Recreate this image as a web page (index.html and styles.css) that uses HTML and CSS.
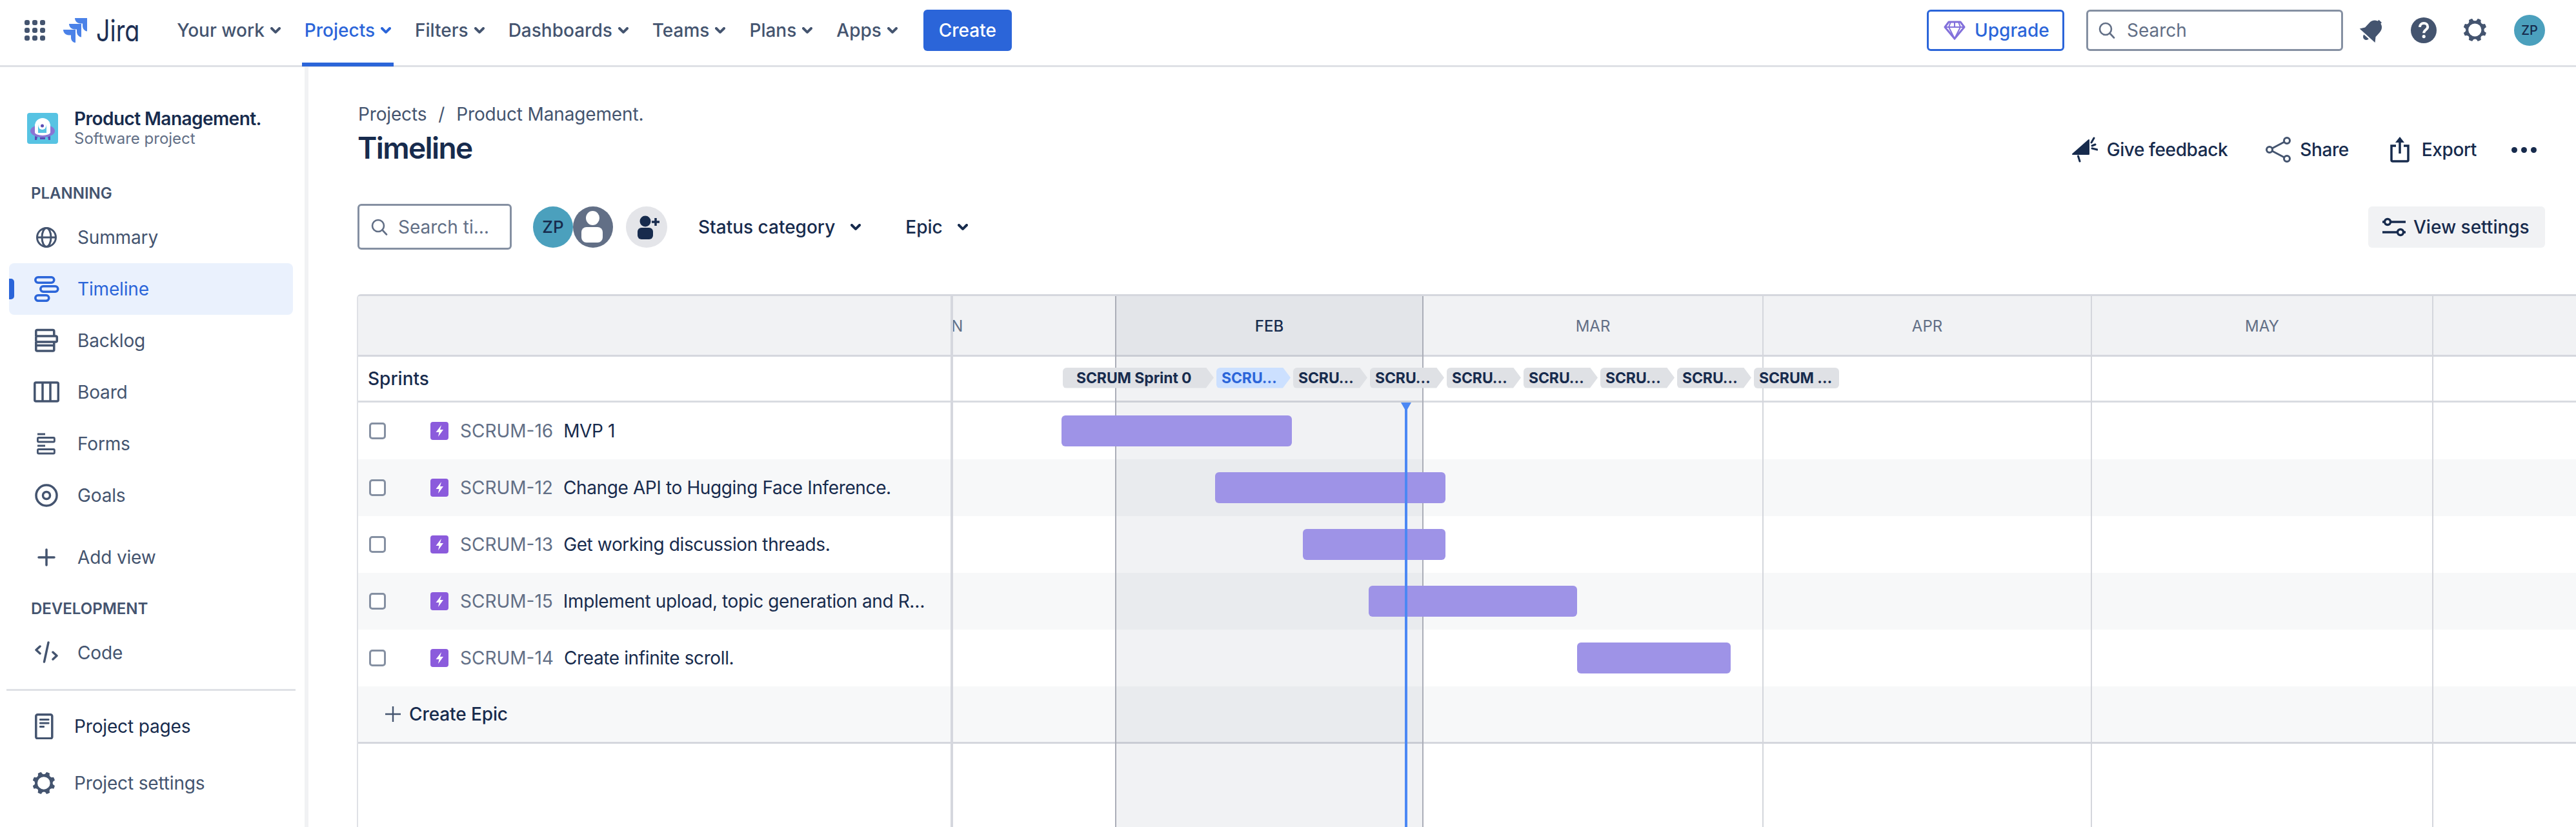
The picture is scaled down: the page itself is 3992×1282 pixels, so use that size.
FILE: index.html
```html
<!DOCTYPE html>
<html lang="en">
<head>
<meta charset="utf-8">
<title>Timeline - Jira</title>
<link rel="stylesheet" href="styles.css">
</head>
<body>
<header class="topbar">
  <svg class="apps" viewBox="0 0 32 32"><g fill="#44546F"><rect x="0" y="0" width="8" height="8" rx="3"/><rect x="12" y="0" width="8" height="8" rx="3"/><rect x="24" y="0" width="8" height="8" rx="3"/><rect x="0" y="12" width="8" height="8" rx="3"/><rect x="12" y="12" width="8" height="8" rx="3"/><rect x="24" y="12" width="8" height="8" rx="3"/><rect x="0" y="24" width="8" height="8" rx="3"/><rect x="12" y="24" width="8" height="8" rx="3"/><rect x="24" y="24" width="8" height="8" rx="3"/></g></svg>
  <svg class="jira-mark" viewBox="0 0 37 38"><g fill="#4B82E8"><path d="M37 0H18c0 4.700 3.800 8.500 8.500 8.500H30v3.400c0 4.700 3 8.100 7 8.500z"/><path d="M28 9H9c0 4.700 3.800 8.500 8.500 8.500H21v3.400c0 4.700 3 8.100 7 8.500z"/><path d="M19 18H0c0 4.700 3.800 8.500 8.500 8.500H12v3.400c0 4.700 3 8.100 7 8.100z"/></g></svg>
  <span class="jira-word">Jira</span>
  <nav class="mainnav">
    <a class="navlink">Your work<svg class="chev" viewBox="8 10 8 5"><use href="#chevron"/></svg></a>
    <a class="navlink is-current">Projects<svg class="chev" viewBox="8 10 8 5"><use href="#chevron"/></svg></a>
    <a class="navlink">Filters<svg class="chev" viewBox="8 10 8 5"><use href="#chevron"/></svg></a>
    <a class="navlink">Dashboards<svg class="chev" viewBox="8 10 8 5"><use href="#chevron"/></svg></a>
    <a class="navlink">Teams<svg class="chev" viewBox="8 10 8 5"><use href="#chevron"/></svg></a>
    <a class="navlink">Plans<svg class="chev" viewBox="8 10 8 5"><use href="#chevron"/></svg></a>
    <a class="navlink">Apps<svg class="chev" viewBox="8 10 8 5"><use href="#chevron"/></svg></a>
  </nav>
  <button class="create-btn">Create</button>
  <div class="topright">
    <button class="upgrade-btn"><svg class="gem" viewBox="0 0 34 30"><path d="M8 2h18l6 8-15 18L2 10z" fill="none" stroke="#8270DB" stroke-width="3" stroke-linejoin="round"/><path d="M2 10h30M11 2l-3 8 9 18 9-18-3-8M17 2v8" fill="none" stroke="#8270DB" stroke-width="2"/></svg>Upgrade</button>
    <div class="global-search"><svg class="mag" viewBox="0 0 26 26"><circle cx="11" cy="11" r="9" fill="none" stroke="#626F86" stroke-width="2.600"/><path d="M17.500 17.500l6.500 7" stroke="#626F86" stroke-width="2.600" stroke-linecap="round"/></svg><span>Search</span></div>
    <div class="global-icons">
      <svg class="gicon" viewBox="0 0 24 24"><g transform="rotate(42 12 12)" fill="#44546F"><path d="M12 3.500c-3.300 0-5.500 2.500-5.500 5.800v4.700L4 17.500h16L17.500 14V9.300c0-3.300-2.200-5.800-5.500-5.800z"/><path d="M10.500 2.500h3v2h-3z"/><path d="M9.500 18.700a2.500 2.500 0 0 0 5 0z"/></g></svg>
      <svg class="gicon" viewBox="0 0 24 24"><circle cx="12" cy="12" r="10" fill="#44546F"/><path d="M9 9.500c0-1.800 1.300-3 3.100-3 1.700 0 3 1.100 3 2.700 0 2.400-3 2.500-3 4.900" fill="none" stroke="#fff" stroke-width="2"/><circle cx="12.100" cy="16.800" r="1.300" fill="#fff"/></svg>
      <svg class="gicon" viewBox="0 0 24 24"><use href="#gear"/></svg>
      <div class="avatar avatar-small">ZP</div>
    </div>
  </div>
</header>

<svg class="defs" aria-hidden="true">
  <defs>
    <path id="chevron" d="M8.292 10.293a1.009 1.009 0 0 0 0 1.419l2.939 2.965c.218.215.5.322.779.322s.556-.107.769-.322l2.930-2.955a1.010 1.010 0 0 0 0-1.419.987.987 0 0 0-1.406 0l-2.298 2.317-2.307-2.327a.99.99 0 0 0-1.406 0z" fill="currentColor"/>
    <path id="gear" fill="#44546F" fill-rule="evenodd" d="M11.701 16.700a5.002 5.002 0 1 1 0-10.003 5.002 5.002 0 0 1 0 10.004m8.368-3.117a1.995 1.995 0 0 1-1.346-1.885c0-.876.563-1.613 1.345-1.885a.48.48 0 0 0 .315-.574 8.947 8.947 0 0 0-.836-1.993.477.477 0 0 0-.598-.195 2.040 2.040 0 0 1-1.290.08 1.988 1.988 0 0 1-1.404-1.395 2.040 2.040 0 0 1 .076-1.297.478.478 0 0 0-.196-.597 8.980 8.980 0 0 0-1.975-.826.479.479 0 0 0-.574.314 1.995 1.995 0 0 1-1.885 1.346 1.994 1.994 0 0 1-1.884-1.345.482.482 0 0 0-.575-.315c-.708.2-1.379.485-2.004.842a.47.47 0 0 0-.198.582A2.002 2.002 0 0 1 4.445 7.060a.478.478 0 0 0-.595.196 8.946 8.946 0 0 0-.833 1.994.48.48 0 0 0 .308.572 1.995 1.995 0 0 1 1.323 1.877c0 .867-.552 1.599-1.324 1.877a.479.479 0 0 0-.308.57 8.990 8.990 0 0 0 .723 1.790.477.477 0 0 0 .624.194c.595-.273 1.343-.264 2.104.238.117.077.225.185.302.3.527.8.512 1.580.198 2.188a.473.473 0 0 0 .168.628 8.946 8.946 0 0 0 2.110.897.474.474 0 0 0 .57-.313 1.995 1.995 0 0 1 1.886-1.353c.878 0 1.618.567 1.887 1.353a.475.475 0 0 0 .57.313 8.964 8.964 0 0 0 2.084-.883.473.473 0 0 0 .167-.631c-.318-.608-.337-1.393.191-2.195.077-.116.185-.225.302-.302.772-.511 1.527-.513 2.125-.23a.477.477 0 0 0 .628-.19 8.925 8.925 0 0 0 .728-1.793.478.478 0 0 0-.314-.573"/>
    <g id="epic"><rect width="28" height="28" rx="4" fill="#8B5BDC"/><path d="M17 5L8.500 16h5L12 23l8-11h-5z" fill="#fff"/></g>
  </defs>
</svg>

<div class="shell">
  <aside class="sidebar">
    <div class="project">
      <svg class="project-icon" viewBox="0 0 48 48"><rect width="48" height="48" rx="4" fill="#57C3E3"/><path d="M12 36v6h3l1-5zM36 36v6h-3l-1-5zM20 38h8v3h-8z" fill="#5A4CB5"/><ellipse cx="24" cy="28" rx="19" ry="10" fill="#8A75D3"/><path d="M12 20a12 12 0 0 1 24 0v10a12 5 0 0 1-24 0z" fill="#fff"/><path d="M17 22a6.500 7 0 0 1 13 0v9h-13z" fill="#57C3E3"/><circle cx="23.500" cy="20" r="6" fill="#fff"/><circle cx="23.500" cy="20" r="2.500" fill="#5A4CB5"/></svg>
      <div class="project-text">
        <div class="project-name">Product Management.</div>
        <div class="project-type">Software project</div>
      </div>
    </div>
    <div class="side-label side-label-first">PLANNING</div>
    <ul class="side-list">
      <li class="side-item"><svg class="side-icon" viewBox="0 0 40 40"><g fill="none" stroke="#44546F" stroke-width="3"><circle cx="20" cy="20" r="14.500"/><ellipse cx="20" cy="20" rx="7" ry="14.500"/><path d="M5.500 20h29"/></g></svg>Summary</li>
      <li class="side-item is-active"><svg class="side-icon" viewBox="0 0 40 40"><g fill="none" stroke="#2B65D9" stroke-width="3.500"><rect x="2.800" y="1.800" width="29" height="8.500" rx="4.200"/><rect x="10.800" y="15.800" width="27" height="8.500" rx="4.200"/><rect x="2.800" y="29.800" width="21" height="8.500" rx="4.200"/></g></svg>Timeline</li>
      <li class="side-item"><svg class="side-icon" viewBox="0 0 40 40"><g fill="none" stroke="#44546F" stroke-width="3.500"><path d="M3.800 13V5.500a2 2 0 0 1 2-2h24a2 2 0 0 1 2 2V13"/><rect x="3.800" y="13" width="32.500" height="9" rx="2"/><path d="M3.800 22v12a2 2 0 0 0 2 2h24a2 2 0 0 0 2-2V22M3.800 27.500h28"/></g></svg>Backlog</li>
      <li class="side-item"><svg class="side-icon" viewBox="0 0 40 40"><g fill="none" stroke="#44546F" stroke-width="3.500"><rect x="1.800" y="5" width="36.500" height="29" rx="2"/><path d="M14 5v29M26 5v29"/></g></svg>Board</li>
      <li class="side-item"><svg class="side-icon" viewBox="0 0 40 40"><g fill="none" stroke="#44546F" stroke-width="2.800"><path d="M6 5h12M6 23h12"/><rect x="6.400" y="10.500" width="26" height="6.500" rx="1.500"/><rect x="6.400" y="28.500" width="26" height="6.500" rx="1.500"/></g></svg>Forms</li>
      <li class="side-item"><svg class="side-icon" viewBox="0 0 40 40"><g fill="none" stroke="#44546F" stroke-width="3.500"><circle cx="20" cy="20" r="16"/><circle cx="20" cy="20" r="5.500"/></g></svg>Goals</li>
      <li class="side-item side-add"><svg class="side-icon" viewBox="0 0 40 40"><path d="M8 20h24M20 8v24" stroke="#44546F" stroke-width="3.500" stroke-linecap="round"/></svg>Add view</li>
    </ul>
    <div class="side-label side-label-dev">DEVELOPMENT</div>
    <ul class="side-list">
      <li class="side-item"><svg class="side-icon" viewBox="0 0 40 40"><path d="M10 10L4 15.500l6 5.500M30 19l6 5.500-6 5.500M23 4l-6.500 30" fill="none" stroke="#44546F" stroke-width="3.500" stroke-linecap="round" stroke-linejoin="round"/></svg>Code</li>
    </ul>
    <hr class="side-rule">
    <ul class="side-list">
      <li class="side-item side-link side-dark"><svg class="side-icon" viewBox="0 0 40 40"><g fill="#44546F"><rect x="3.800" y="1.800" width="25" height="37" rx="2.500" fill="none" stroke="#44546F" stroke-width="3.500"/><rect x="9" y="8" width="15.500" height="3" rx="1"/><rect x="9" y="13.500" width="15.500" height="3" rx="1"/><rect x="9" y="19" width="8" height="3" rx="1"/></g></svg>Project pages</li>
      <li class="side-item side-link side-settings"><svg class="side-icon" viewBox="2.500 2.500 18.500 18.500"><use href="#gear"/></svg>Project settings</li>
    </ul>
  </aside>

  <main class="content">
    <div class="pagehead">
      <div>
        <div class="crumbs"><span>Projects</span><span class="crumb-sep">/</span><span>Product Management.</span></div>
        <h1 class="title">Timeline</h1>
      </div>
      <div class="actions">
        <span class="action"><svg class="act-icon" viewBox="0 0 40 40"><path d="M1 27L26 5v22z" fill="#172B4D" stroke="#172B4D" stroke-width="2" stroke-linejoin="round"/><path d="M9.500 30l2.500 8M30 9l4-7M31 18l8 2M31 14l5-2" stroke="#172B4D" stroke-width="3" stroke-linecap="round"/></svg>Give feedback</span>
        <span class="action action-share"><svg class="act-icon" viewBox="0 0 40 40"><g fill="none" stroke="#44546F" stroke-width="3"><circle cx="6" cy="20" r="4.500"/><circle cx="33" cy="6" r="4.500"/><circle cx="33" cy="34" r="4.500"/><path d="M10 18L29 8M10 22l19 10"/></g></svg>Share</span>
        <span class="action action-export"><svg class="act-icon" viewBox="0 0 32 40"><g fill="none" stroke="#172B4D" stroke-width="3.500"><path d="M9 14H2v22a2 2 0 0 0 2 2h22a2 2 0 0 0 2-2V14h-7"/><path d="M15 26V5"/></g><path d="M15 0l7 9H8z" fill="#172B4D"/></svg>Export</span>
        <span class="more"><i></i><i></i><i></i></span>
      </div>
    </div>

    <div class="toolbar">
      <div class="tl-search"><svg class="mag" viewBox="0 0 26 26"><circle cx="11" cy="11" r="9" fill="none" stroke="#626F86" stroke-width="2.600"/><path d="M17.500 17.500l6.500 7" stroke="#626F86" stroke-width="2.600" stroke-linecap="round"/></svg><span>Search ti…</span></div>
      <div class="avatars">
        <div class="avatar avatar-zp">ZP</div>
        <svg class="avatar-anon" viewBox="0 0 62 64"><ellipse cx="31" cy="32" rx="31" ry="32" fill="#626F86"/><ellipse cx="30.500" cy="18" rx="10.500" ry="11" fill="#fff"/><rect x="13" y="32" width="33" height="24" rx="8" fill="#fff"/></svg>
        <svg class="avatar-add" viewBox="0 0 64 64"><circle cx="32" cy="32" r="32" fill="#E4E5E9"/><circle cx="30" cy="23" r="8.500" fill="#172B4D"/><rect x="18" y="33" width="24" height="18" rx="6" fill="#172B4D"/><path d="M46 18v12M40 24h12" stroke="#172B4D" stroke-width="3.500"/></svg>
      </div>
      <span class="filter filter-status">Status category<svg class="chev" viewBox="8 10 8 5"><use href="#chevron"/></svg></span>
      <span class="filter filter-epic">Epic<svg class="chev" viewBox="8 10 8 5"><use href="#chevron"/></svg></span>
      <button class="view-settings"><svg class="vs-icon" viewBox="0 0 36 30"><g stroke="#172B4D" stroke-width="3.500" fill="#fff"><path d="M0 7h36M0 23h36"/><circle cx="8" cy="7" r="4.500"/><circle cx="28" cy="23" r="4.500"/></g></svg>View settings</button>
    </div>

    <section class="chart">
      <div class="row row-head"><div class="left"></div><div class="right"></div></div>
      <div class="row row-sprints">
        <div class="left"><span class="sprints-title">Sprints</span></div>
        <div class="right chips">
          <span class="chip chip-first" style="width:234px">SCRUM Sprint 0</span>
          <span class="chip chip-now" style="width:115px">SCRU…</span>
          <span class="chip" style="width:115px">SCRU…</span>
          <span class="chip" style="width:115px">SCRU…</span>
          <span class="chip" style="width:115px">SCRU…</span>
          <span class="chip" style="width:115px">SCRU…</span>
          <span class="chip" style="width:115px">SCRU…</span>
          <span class="chip" style="width:115px">SCRU…</span>
          <span class="chip chip-last" style="width:132px">SCRUM …</span>
        </div>
      </div>
      <div class="row">
        <div class="left"><span class="check"></span><svg class="epic" viewBox="0 0 28 28"><use href="#epic"/></svg><span class="key">SCRUM-16</span><span class="summary">MVP 1</span></div>
        <div class="right"><div class="bar" style="margin-left:168px;width:357px"></div></div>
      </div>
      <div class="row row-alt">
        <div class="left"><span class="check"></span><svg class="epic" viewBox="0 0 28 28"><use href="#epic"/></svg><span class="key">SCRUM-12</span><span class="summary">Change API to Hugging Face Inference.</span></div>
        <div class="right"><div class="bar" style="margin-left:406px;width:357px"></div></div>
      </div>
      <div class="row">
        <div class="left"><span class="check"></span><svg class="epic" viewBox="0 0 28 28"><use href="#epic"/></svg><span class="key">SCRUM-13</span><span class="summary">Get working discussion threads.</span></div>
        <div class="right"><div class="bar" style="margin-left:542px;width:221px"></div></div>
      </div>
      <div class="row row-alt">
        <div class="left"><span class="check"></span><svg class="epic" viewBox="0 0 28 28"><use href="#epic"/></svg><span class="key">SCRUM-15</span><span class="summary">Implement upload, topic generation and R…</span></div>
        <div class="right"><div class="bar" style="margin-left:644px;width:323px"></div></div>
      </div>
      <div class="row">
        <div class="left"><span class="check"></span><svg class="epic" viewBox="0 0 28 28"><use href="#epic"/></svg><span class="key">SCRUM-14</span><span class="summary">Create infinite scroll.</span></div>
        <div class="right"><div class="bar" style="margin-left:967px;width:238px"></div></div>
      </div>
      <div class="row row-alt row-create">
        <div class="left"><svg class="plus" viewBox="0 0 24 24"><path d="M0 12h24M12 0v24" stroke="#44546F" stroke-width="2.400"/></svg><span class="summary">Create Epic</span></div>
        <div class="right"></div>
      </div>

      <div class="months">
        <div class="month month-clipped" style="width:253px"><div class="month-label" style="width:527px;margin-left:-272px">JAN</div></div>
        <div class="month month-now" style="width:476px"><div class="month-label">FEB</div></div>
        <div class="month" style="width:527px"><div class="month-label">MAR</div></div>
        <div class="month" style="width:509px"><div class="month-label">APR</div></div>
        <div class="month" style="width:529px"><div class="month-label">MAY</div></div>
        <div class="month month-rest"></div>
      </div>
      <div class="today"></div>
    </section>
  </main>
</div>
</body>
</html>
```
FILE: styles.css
```css
* { box-sizing: border-box; }
html, body { margin: 0; height: 100%; }
body {
  width: 3992px;
  height: 1282px;
  overflow: hidden;
  display: flex;
  flex-direction: column;
  background: #fff;
  color: #172B4D;
  font-family: Inter, "Liberation Sans", sans-serif;
  font-size: 28px;
  line-height: 40px;
}
button { font: inherit; border: 0; background: none; color: inherit; padding: 0; }
ul { list-style: none; margin: 0; padding: 0; }
.defs { width: 0; height: 0; position: absolute; }

/* top bar */
.topbar {
  flex: none;
  height: 104px;
  display: flex;
  align-items: center;
  padding: 0 48px 7px 38px;
  border-bottom: 3px solid #DFE1E6;
}
.apps { width: 32px; height: 32px; flex: none; }
.jira-mark { width: 37px; height: 38px; margin-left: 28px; flex: none; }
.jira-word {
  margin-left: 14px;
  font-size: 46px;
  font-weight: 400;
  line-height: 48px;
  color: #1D2F54;
  font-feature-settings: "cv11";
  transform: scaleX(0.82);
  transform-origin: left center;
}
.mainnav {
  display: flex;
  align-items: stretch;
  align-self: flex-start;
  height: 103px;
  gap: 29px;
  margin-left: 39px;
}
.navlink {
  display: flex;
  align-items: center;
  gap: 9px;
  padding: 0 4px 3px;
  font-weight: 500;
  color: #44546F;
  border-bottom: 6px solid transparent;
}
.navlink.is-current { color: #2B65D9; border-bottom-color: #2B65D9; }
.chev { width: 16px; height: 10px; flex: none; }
.create-btn {
  margin-left: 36px;
  width: 137px;
  height: 64px;
  border-radius: 6px;
  background: #2B65D9;
  color: #fff;
  font-weight: 500;
}
.topright { margin-left: auto; display: flex; align-items: center; }
.upgrade-btn {
  width: 213px;
  height: 64px;
  display: flex;
  align-items: center;
  gap: 14px;
  padding-left: 23px;
  border: 3px solid #2B65D9;
  border-radius: 6px;
  color: #2B65D9;
  font-weight: 500;
}
.gem { width: 34px; height: 30px; flex: none; }
.global-search {
  width: 398px;
  height: 64px;
  margin-left: 34px;
  display: flex;
  align-items: center;
  gap: 18px;
  padding-left: 16px;
  border: 3px solid #8590A2;
  border-radius: 6px;
  color: #626F86;
}
.mag { width: 26px; height: 26px; flex: none; }
.global-icons { margin-left: 21px; display: flex; align-items: center; gap: 32px; }
.gicon { width: 48px; height: 48px; flex: none; }
.avatar {
  border-radius: 50%;
  background: #4BA0BD;
  color: #172B4D;
  display: flex;
  align-items: center;
  justify-content: center;
  flex: none;
  font-weight: 500;
}
.avatar-small { width: 48px; height: 48px; font-size: 20px; margin-left: 4px; }

/* shell */
.shell { flex: 1; display: flex; min-height: 0; }
.sidebar {
  width: 478px;
  flex: none;
  border-right: 6px solid #F1F2F4;
  padding-top: 64px;
}
.project { display: flex; align-items: center; gap: 25px; padding-left: 42px; }
.project-icon { width: 48px; height: 48px; flex: none; }
.project-name { font-weight: 600; line-height: 32px; letter-spacing: -0.55px; }
.project-type { font-size: 24px; line-height: 30px; color: #626F86; }
.side-label { padding-left: 48px; font-size: 24px; line-height: 32px; font-weight: 600; color: #44546F; }
.side-label-first { margin-top: 54px; margin-bottom: 12px; }
.side-label-dev { margin-top: 24px; margin-bottom: 12px; }
.side-item {
  position: relative;
  width: 440px;
  height: 80px;
  margin-left: 14px;
  display: flex;
  align-items: center;
  gap: 28px;
  padding-left: 38px;
  border-radius: 8px;
  color: #44546F;
  letter-spacing: -0.15px;
}
.side-icon { width: 40px; height: 40px; flex: none; }
.side-item.is-active { background: #EAF1FD; color: #2B65D9; }
.side-item.is-active::before {
  content: "";
  position: absolute;
  left: 0;
  top: 24px;
  width: 8px;
  height: 32px;
  background: #2B65D9;
  border-radius: 0 5px 5px 0;
}
.side-add { margin-top: 16px; }
.side-rule { margin: 16px 0 15px 10px; width: 448px; height: 3px; border: 0; background: #DFE1E6; }
.side-link { gap: 23px; }
.side-dark { color: #172B4D; }
.side-settings { margin-top: 8px; padding-left: 36px; gap: 29px; }
.side-settings .side-icon { width: 36px; height: 36px; }

/* main */
.content { flex: 1; min-width: 0; padding: 53px 48px 0 76px; display: flex; flex-direction: column; }
.pagehead { display: flex; justify-content: space-between; align-items: flex-end; }
.crumbs { display: flex; gap: 18px; color: #44546F; padding-left: 1px; letter-spacing: -0.15px; }
.title { margin: 4px 0 0; font-size: 46px; line-height: 56px; font-weight: 600; letter-spacing: -1.6px; }
.actions { display: flex; align-items: center; margin-bottom: 5px; margin-right: 13px; font-weight: 500; letter-spacing: -0.4px; }
.action { display: flex; align-items: center; gap: 14px; }
.act-icon { width: 40px; height: 40px; flex: none; }
.action-share { margin-left: 59px; gap: 13px; }
.action-export { margin-left: 64px; gap: 17px; }
.action-export .act-icon { width: 32px; }
.more { display: flex; gap: 6px; margin-left: 54px; }
.more i { width: 9px; height: 9px; border-radius: 50%; background: #172B4D; }

.toolbar { margin-top: 59px; display: flex; align-items: center; height: 71px; }
.tl-search {
  width: 239px;
  height: 71px;
  display: flex;
  align-items: center;
  gap: 16px;
  padding-left: 18px;
  border: 3px solid #8590A2;
  border-radius: 6px;
  color: #626F86;
  flex: none;
}
.avatars { display: flex; align-items: center; margin-left: 33px; }
.avatar-zp { width: 62px; height: 64px; font-size: 26px; }
.avatar-anon { width: 62px; height: 64px; flex: none; }
.avatar-add { width: 64px; height: 64px; margin-left: 20px; flex: none; }
.filter { display: flex; align-items: center; font-weight: 500; color: #172B4D; }
.filter-status { margin-left: 48px; gap: 24px; }
.filter-epic { margin-left: 69px; gap: 23px; }
.view-settings {
  margin-left: auto;
  width: 274px;
  height: 64px;
  display: flex;
  align-items: center;
  gap: 12px;
  padding-left: 22px;
  border-radius: 6px;
  background: #F1F2F4;
  font-weight: 500;
}
.vs-icon { width: 36px; height: 30px; flex: none; }

/* chart */
.chart {
  position: relative;
  flex: 1;
  margin: 69px -48px 0 -1px;
  border-left: 2px solid #DFE1E6;
  border-top: 3px solid #D5D7DE;
  border-top-left-radius: 6px;
  overflow: hidden;
}
.chart::after {
  content: "";
  position: absolute;
  left: 918px;
  top: 0;
  bottom: 0;
  width: 4px;
  background: #D5D7DE;
  z-index: 1;
}
.row { display: flex; height: 88px; background: #fff; }
.row-alt { background: #F7F8F9; }
.left { width: 922px; flex: none; display: flex; align-items: center; padding-left: 17px; }
.right { flex: 1; min-width: 0; display: flex; align-items: center; }
.row-head { height: 94px; background: #F1F2F4; border-bottom: 3px solid #D5D7DE; }
.row-sprints { height: 71px; border-bottom: 3px solid #D9DBE1; }
.row-sprints .left { padding-left: 15px; }
.sprints-title { font-weight: 500; }
.row-create { height: 89px; border-bottom: 3px solid #D5D7DE; }
.row-create .left { padding-left: 42px; gap: 13px; }
.plus { width: 24px; height: 24px; flex: none; }
.row-create .summary { font-weight: 500; }

.check { width: 26px; height: 26px; flex: none; border: 3px solid #8590A2; border-radius: 5px; background: #fff; }
.epic { width: 28px; height: 28px; margin-left: 69px; flex: none; }
.key { margin-left: 18px; color: #626F86; }
.summary { margin-left: 16px; white-space: nowrap; letter-spacing: -0.38px; }
.row-create .summary { margin-left: 0; letter-spacing: -0.1px; }

.chips { gap: 4px; padding-left: 170px; position: relative; z-index: 2; padding-bottom: 3px; }
.chip {
  flex: none;
  height: 32px;
  line-height: 32px;
  padding-left: 8px;
  font-size: 23px;
  font-weight: 700;
  letter-spacing: -0.1px;
  white-space: nowrap;
  background: #DFE1E5;
  border-radius: 6px 0 0 6px;
  clip-path: polygon(0 0, calc(100% - 12px) 0, 100% 50%, calc(100% - 12px) 100%, 0 100%);
}
.chip-first { padding-left: 21px; }
.chip-now { background: #CCE0FF; color: #2B65D9; }
.chip-last { border-radius: 6px; clip-path: none; }

.bar { position: relative; z-index: 2; height: 48px; border-radius: 6px; background: #9E93E7; }

.months {
  position: absolute;
  left: 922px;
  right: 0;
  top: 0;
  bottom: 0;
  display: flex;
  pointer-events: none;
}
.month { flex: none; height: 100%; border-right: 2px solid #D4D6DC; overflow: hidden; }
.month-clipped { border-right-color: #ABAEB8; }
.month-now { border-right-color: #ABAEB8; background: rgba(9, 30, 66, 0.06); }
.month-rest { flex: 1; border-right: 0; }
.month-label {
  height: 94px;
  display: flex;
  align-items: center;
  justify-content: center;
  font-size: 24px;
  color: #626F86;
}
.month-now .month-label { color: #172B4D; font-weight: 500; }
.today {
  position: absolute;
  left: 1622px;
  top: 165px;
  bottom: 0;
  width: 4px;
  background: #4C88F4;
  z-index: 3;
}
.today::before {
  content: "";
  position: absolute;
  left: -6px;
  top: 0;
  width: 16px;
  height: 14px;
  background: #4C88F4;
  clip-path: polygon(0 0, 100% 0, 50% 100%);
}
```
